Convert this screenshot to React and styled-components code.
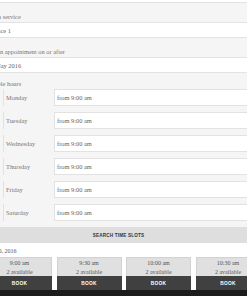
import React from "react";
import styled, { createGlobalStyle } from "styled-components";

const days = ["Monday", "Tuesday", "Wednesday", "Thursday", "Friday", "Saturday"];
const slots = ["9:00 am", "9:30 am", "10:00 am", "10:30 am"];

const App = () => {
  return (
    <>
      <GlobalStyle />
      <Page>
        <FieldLabel>Select a service</FieldLabel>
        <FieldValue>Service 1</FieldValue>
        <FieldLabel>Make an appointment on or after</FieldLabel>
        <FieldValue>20 May 2016</FieldValue>
        <HoursPanel>
          <HoursLabel>Available hours</HoursLabel>
          <DayList>
            {days.map((d) => (
              <DayRow key={d}>
                <DayName>{d}</DayName>
                <DayInput>from 9:00 am</DayInput>
              </DayRow>
            ))}
          </DayList>
        </HoursPanel>
        <SearchButton>Search time slots</SearchButton>
        <DateLine>May 20, 2016</DateLine>
        <SlotRow>
          {slots.map((s) => (
            <Slot key={s}>
              <SlotInfo>
                <div>{s}</div>
                <div>2 available</div>
              </SlotInfo>
              <BookButton>Book</BookButton>
            </Slot>
          ))}
        </SlotRow>
        <Footer />
      </Page>
    </>
  );
};

export default App;

const GlobalStyle = createGlobalStyle`
  html, body {
    margin: 0;
    padding: 0;
    background: #fff;
    overflow: hidden;
  }
  body {
    width: 247px;
    height: 296px;
  }
`;

const Page = styled.div`
  width: 289px;
  margin-left: -26px;
  padding-top: 2px;
  font-family: "Liberation Serif", "Times New Roman", serif;
  font-size: 6.4px;
  color: #666;
`;

const FieldLabel = styled.div`
  background: #f5f5f5;
  border-top: 1px solid #e3e3e3;
  padding: 10px 0 1px 7px;
  line-height: 8px;
  color: #777;
`;

const FieldValue = styled.div`
  background: #fff;
  border-top: 1px solid #e3e3e3;
  padding-left: 13px;
  height: 14px;
  line-height: 15px;
`;

const HoursPanel = styled.div`
  background: #f5f5f5;
  border-top: 1px solid #e3e3e3;
  padding: 7px 0 6px 7px;
`;

const HoursLabel = styled.div`
  line-height: 8px;
  margin-bottom: 1px;
  color: #777;
`;

const DayList = styled.div`
  display: flex;
  flex-direction: column;
  gap: 6px;
  margin-left: 22px;
`;

const DayRow = styled.div`
  display: flex;
  height: 17px;
`;

const DayName = styled.div`
  width: 51px;
  box-sizing: border-box;
  border-left: 1px solid #e2e2e2;
  padding-left: 2px;
  line-height: 17px;
  color: #777;
`;

const DayInput = styled.div`
  flex: 1;
  background: #fff;
  border: 1px solid #e2e2e2;
  border-right: none;
  padding-left: 2px;
  line-height: 15px;
`;

const SearchButton = styled.div`
  height: 16px;
  background: #dedede;
  display: flex;
  align-items: center;
  justify-content: center;
  font-family: "Liberation Sans", Arial, sans-serif;
  font-weight: bold;
  font-size: 4.6px;
  letter-spacing: 0.2px;
  text-transform: uppercase;
  color: #333;
`;

const DateLine = styled.div`
  height: 14px;
  box-sizing: border-box;
  padding: 3px 0 0 9px;
  line-height: 10px;
  font-size: 6px;
  color: #555;
`;

const SlotRow = styled.div`
  display: flex;
  gap: 4.5px;
  padding-left: 13px;
`;

const Slot = styled.div`
  width: 65px;
  flex-shrink: 0;
  display: flex;
  flex-direction: column;
`;

const SlotInfo = styled.div`
  height: 19px;
  box-sizing: border-box;
  background: #e0e0e0;
  border: 1px solid #d2d2d2;
  border-bottom: none;
  padding-top: 0.5px;
  text-align: center;
  line-height: 9px;
  font-size: 6px;
  color: #555;
`;

const BookButton = styled.div`
  height: 14px;
  background: #404040;
  color: #fff;
  display: flex;
  align-items: center;
  justify-content: center;
  font-family: "Liberation Sans", Arial, sans-serif;
  font-weight: bold;
  font-size: 4.8px;
  letter-spacing: 0.3px;
  text-transform: uppercase;
`;

const Footer = styled.div`
  height: 6px;
  background: #1c1c1c;
`;
